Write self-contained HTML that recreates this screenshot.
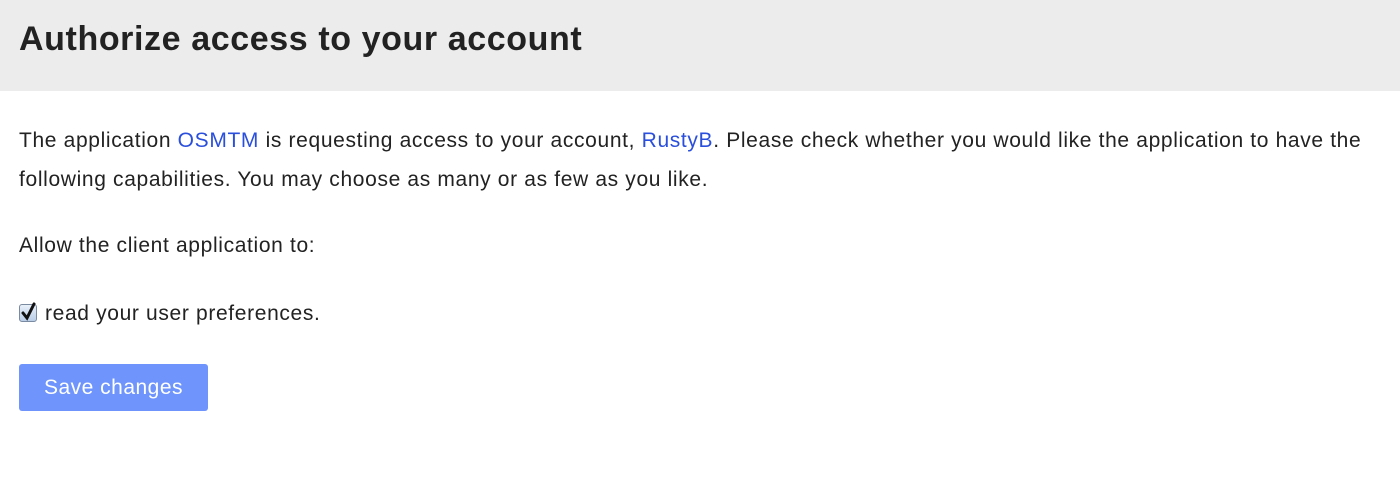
<!DOCTYPE html>
<html><head><meta charset="utf-8"><style>
body{margin:0;width:1400px;height:481px;background:#fff;font-family:"Liberation Sans",Arial,sans-serif;color:#222;overflow:hidden}
.hd{background:#ececec;height:91px;position:relative}
.hd h1{margin:0;position:absolute;left:19px;top:20px;font-size:34px;font-weight:bold;color:#222;letter-spacing:0.6px}
.c{position:absolute;left:19px;font-size:21px;line-height:39px;letter-spacing:0.65px}
a{color:#2a4fdc;text-decoration:none}
.cb{display:inline-block;width:16px;height:16px;border:1px solid #7a8aa0;border-radius:3px;background:linear-gradient(#e8f0fa,#b9cde6);vertical-align:-2px;position:relative;margin-right:8px}
.cb svg{position:absolute;left:1px;top:-4px}
.btn{position:absolute;left:19px;top:364px;width:189px;height:47px;background:#6f95fd;border-radius:3px;color:#fff;font-size:21px;letter-spacing:0.5px;line-height:47px;text-align:center}
</style></head><body>
<div class="hd"><h1>Authorize access to your account</h1></div>
<div class="c" style="top:121px;width:1370px">The application <a>OSMTM</a> is requesting access to your account, <a>RustyB</a>. Please check whether you would like the application to have the following capabilities. You may choose as many or as few as you like.</div>
<div class="c" style="top:226px">Allow the client application to:</div>
<div class="c" style="top:294px"><span class="cb"><svg width="16" height="20" viewBox="0 0 16 20"><path d="M2 12 L6 17 L13 3" stroke="#111" stroke-width="3" fill="none" stroke-linecap="round"/></svg></span>read your user preferences.</div>
<div class="btn">Save changes</div>
</body></html>
